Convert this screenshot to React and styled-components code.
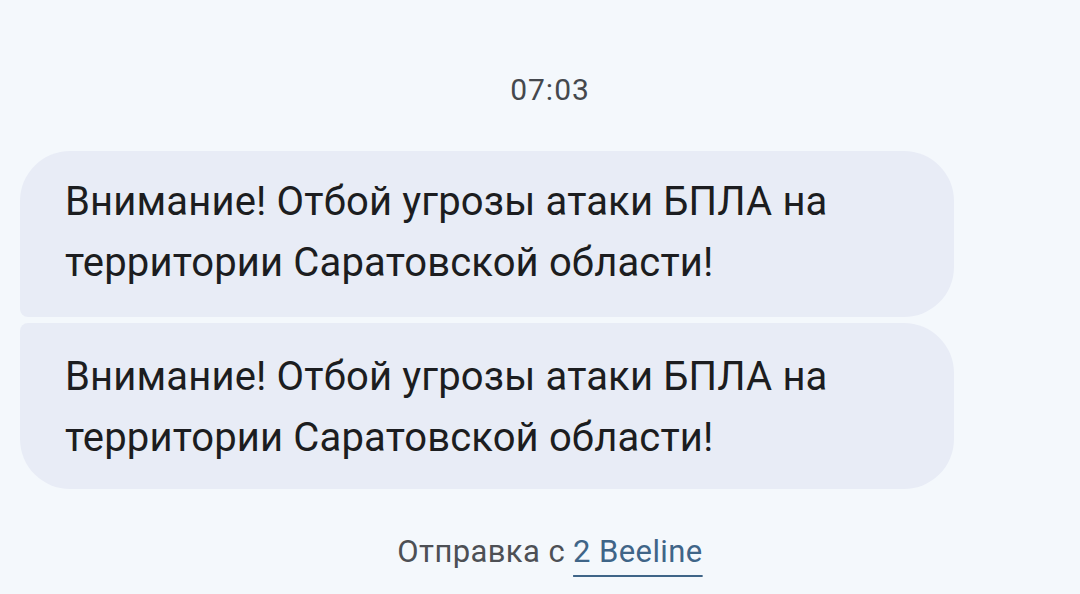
import styled, { createGlobalStyle } from 'styled-components';

const GlobalStyle = createGlobalStyle`
	html, body {
		margin: 0;
		padding: 0;
		background: #f4f8fc;
	}
	body {
		font-family: Roboto, "Noto Sans", sans-serif;
	}
`;

const messages = [
	{ id: 1, text: 'Внимание! Отбой угрозы атаки БПЛА на территории Саратовской области!', first: true },
	{ id: 2, text: 'Внимание! Отбой угрозы атаки БПЛА на территории Саратовской области!', first: false },
];

export default function App() {
	return (
		<>
			<GlobalStyle />
			<Screen>
				<Time>07:03</Time>
				<Thread>
					{messages.map((item) => (
						<Bubble key={item.id} $first={item.first}>
							<Message>{item.text}</Message>
						</Bubble>
					))}
				</Thread>
				<Footer>
					Отправка с <Sender>2 Beeline</Sender>
				</Footer>
			</Screen>
		</>
	);
}

const Screen = styled.div`
	width: 1080px;
	height: 594px;
	display: flex;
	flex-direction: column;
	background: #f4f8fc;
	overflow: hidden;
`;

const Time = styled.div`
	padding: 72px 0 0 20px;
	margin-bottom: 43px;
	text-align: center;
	font-size: 30px;
	line-height: 36px;
	letter-spacing: 1px;
	color: #45484d;
`;

const Thread = styled.div`
	display: flex;
	flex-direction: column;
	gap: 6px;
	padding: 0 126px 0 20px;
`;

const Bubble = styled.div`
	height: 166px;
	box-sizing: border-box;
	padding: ${(props) => (props.$first ? '20px' : '23px')} 40px 0 45px;
	background: #e8ecf6;
	border-radius: ${(props) => (props.$first ? '50px 50px 50px 8px' : '8px 50px 50px 50px')};
`;

const Message = styled.div`
	font-size: 40px;
	line-height: 61px;
	letter-spacing: 0.15px;
	color: #1c1d20;
`;

const Footer = styled.div`
	padding: 45px 0 0 20px;
	text-align: center;
	font-size: 31px;
	line-height: 36px;
	letter-spacing: 0.4px;
	color: #4d5055;
`;

const Sender = styled.span`
	color: #3f6588;
	text-decoration: underline;
	text-underline-offset: 13px;
	text-decoration-thickness: 2px;
`;
